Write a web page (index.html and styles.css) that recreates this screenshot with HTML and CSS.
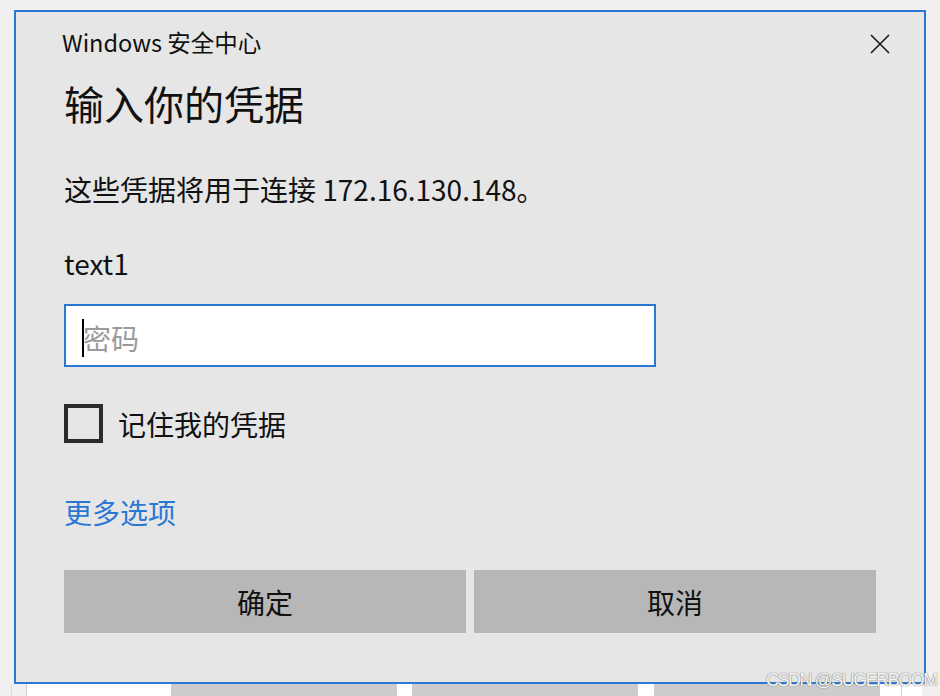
FILE: index.html
```html
<!DOCTYPE html>
<html lang="zh-CN">
<head>
<meta charset="utf-8">
<title>Windows 安全中心</title>
<link rel="stylesheet" href="styles.css">
</head>
<body>
<div class="desk">
  <div class="dialog">
    <div class="titlebar">
      <span class="app">Windows 安全中心</span>
      <span class="close" aria-label="关闭">
        <svg width="20" height="20" viewBox="0 0 20 20"><path d="M1 1 L19 19 M19 1 L1 19" stroke="#1a1a1a" stroke-width="1.6" fill="none"/></svg>
      </span>
    </div>
    <h1 class="heading">输入你的凭据</h1>
    <p class="msg">这些凭据将用于连接 172.16.130.148。</p>
    <p class="user">text1</p>
    <div class="pw"><span class="caret"></span><span class="ph">密码</span></div>
    <div class="remember"><span class="box"></span><span class="label">记住我的凭据</span></div>
    <a class="more">更多选项</a>
    <div class="buttons">
      <span class="btn">确定</span>
      <span class="btn">取消</span>
    </div>
  </div>
  <div class="behind">
    <span class="seg s1"></span><span class="seg ln"></span><span class="seg s2"></span><span class="seg ln2"></span>
    <span class="seg w1"></span><span class="seg g"></span><span class="seg w2"></span><span class="seg g"></span>
    <span class="seg w3"></span><span class="seg g"></span><span class="seg w4"></span><span class="seg ln2"></span><span class="seg w5"></span>
  </div>
</div>
<div class="watermark">CSDN @SUGERBOOM</div>
</body>
</html>
```
FILE: styles.css
```css
html, body {
  margin: 0;
  padding: 0;
}
body {
  width: 940px;
  height: 696px;
  overflow: hidden;
  background: #f0f0f0;
  font-family: "Noto Sans CJK SC", "Noto Sans", sans-serif;
  color: #000;
  position: relative;
}
.desk {
  padding-top: 10px;
}
.dialog {
  box-sizing: border-box;
  margin-left: 14px;
  width: 912px;
  height: 674px;
  border: 2px solid #2b78d4;
  background: #e6e6e6;
  padding: 0 48px;
  display: flex;
  flex-direction: column;
}
.titlebar {
  height: 63px;
  display: flex;
  align-items: center;
  justify-content: space-between;
  margin-right: -14px;
}
.app {
  font-size: 23.5px;
  line-height: 30px;
  margin-left: -2px;
  margin-top: -3px;
  color: #111;
}
.close {
  width: 20px;
  height: 20px;
  display: flex;
}
.heading {
  margin: 0;
  font-size: 40px;
  line-height: 56px;
  font-weight: normal;
  color: #111;
}
.msg {
  margin: 38px 0 0;
  font-size: 28px;
  line-height: 40px;
  color: #111;
}
.user {
  margin: 34px 0 0;
  font-size: 28px;
  line-height: 40px;
  color: #111;
}
.pw {
  box-sizing: border-box;
  margin-top: 21px;
  width: 592px;
  height: 63px;
  border: 2px solid #2b78d4;
  background: #fff;
  padding: 4px 0 0 16px;
  display: flex;
  align-items: center;
}
.caret {
  width: 2px;
  height: 38px;
  background: #000;
  margin-right: -1px;
}
.ph {
  font-size: 28px;
  line-height: 40px;
  color: #9a9a9a;
}
.remember {
  margin-top: 37px;
  display: flex;
  align-items: center;
  gap: 15px;
  height: 39px;
}
.box {
  box-sizing: border-box;
  width: 39px;
  height: 39px;
  border: 4px solid #2b2b2b;
}
.label {
  font-size: 28px;
  line-height: 40px;
  color: #111;
}
.more {
  margin-top: 49px;
  font-size: 28px;
  line-height: 40px;
  color: #2a78d4;
  align-self: flex-start;
}
.buttons {
  margin-top: 38px;
  display: grid;
  grid-template-columns: 1fr 1fr;
  gap: 8px;
}
.btn {
  height: 63px;
  background: #b7b7b7;
  display: flex;
  align-items: center;
  justify-content: center;
  font-size: 28px;
  line-height: 40px;
  color: #111;
}
.behind {
  display: flex;
  height: 12px;
}
.seg { display: block; height: 12px; }
.s1 { width: 11px; background: #f0f0f0; }
.ln { width: 1px; background: #dcdcdc; }
.s2 { width: 14px; background: #f0f0f0; }
.ln2 { width: 1px; background: #cfcfcf; }
.w1 { width: 144px; background: #fff; }
.g { width: 226px; background: #cccccc; }
.w2 { width: 15px; background: #fff; }
.w3 { width: 16px; background: #fff; }
.w4 { width: 21px; background: #fff; }
.w5 { width: 20px; background: #fff; }
.watermark {
  position: absolute;
  left: 766px;
  top: 669px;
  font-family: "Liberation Sans", Arial, sans-serif;
  font-size: 18px;
  line-height: 22px;
  color: #f6f6f6;
  text-shadow: 0 0 1px #777, 0 0 1px #777;
  letter-spacing: -1.5px;
}
```
